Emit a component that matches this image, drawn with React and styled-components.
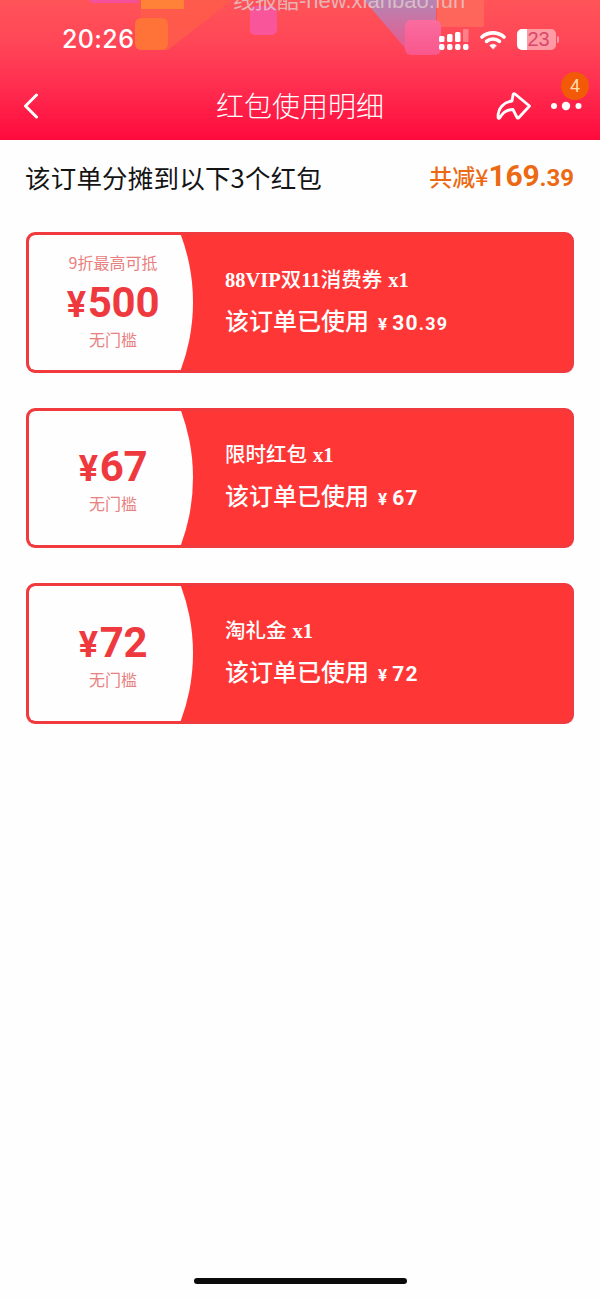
import { createGlobalStyle, styled } from "styled-components";

const CJK = `"Noto Sans CJK SC", "Noto Sans", sans-serif`;
const NUM = `Roboto, "Liberation Sans", sans-serif`;

const GlobalStyle = createGlobalStyle`
  html, body {
    margin: 0;
    padding: 0;
    background: #fff;
  }
  body {
    font-family: ${CJK};
  }
`;

const Page = styled.div`
  width: 600px;
  height: 1298px;
  display: flex;
  flex-direction: column;
  overflow: hidden;
  background: #fefefe;
`;

const Header = styled.header`
  position: relative;
  height: 140px;
  flex: none;
  overflow: hidden;
  color: #fff;
  background: linear-gradient(180deg, #ff5458 0%, #ff4657 30%, #ff2f50 60%, #ff0a3c 100%);
`;

const Decor = styled.svg`
  position: absolute;
  inset: 0;
  filter: blur(0.7px);
`;

const Watermark = styled.div`
  position: absolute;
  top: -12px;
  left: 233px;
  font-family: "Liberation Sans", ${CJK};
  font-size: 22px;
  line-height: 26px;
  white-space: nowrap;
  color: rgba(225, 205, 205, 0.8);
`;

const StatusBar = styled.div`
  position: relative;
  height: 78px;
  box-sizing: border-box;
  padding: 24px 44px 0 62px;
  display: flex;
  align-items: flex-start;
  justify-content: space-between;
`;

const Clock = styled.div`
  font-family: "Inter", ${NUM};
  font-size: 25px;
  font-weight: 500;
  line-height: 30px;
  letter-spacing: 0.4px;
`;

const StatusIcons = styled.div`
  display: flex;
  align-items: center;
  gap: 11px;
  margin-top: 5px;
`;

const Battery = styled.div`
  position: relative;
  width: 39px;
  height: 21px;
  border-radius: 5px;
  background: linear-gradient(90deg, #fff 0 10px, rgba(255, 255, 255, 0.45) 10px);
  display: flex;
  align-items: center;
  justify-content: center;
  padding-left: 4px;
  box-sizing: border-box;
  font-family: "Liberation Sans", sans-serif;
  font-size: 20px;
  color: #d9476c;
  &::after {
    content: "";
    position: absolute;
    right: -3px;
    top: 7px;
    width: 2px;
    height: 7px;
    border-radius: 0 2px 2px 0;
    background: rgba(255, 255, 255, 0.45);
  }
`;

const NavBar = styled.nav`
  position: relative;
  height: 56px;
  box-sizing: border-box;
  padding: 0 17px 0 23px;
  display: flex;
  align-items: center;
  justify-content: space-between;
`;

const NavTitle = styled.h1`
  position: absolute;
  top: 7px;
  left: 0;
  right: 0;
  margin: 0;
  text-align: center;
  font-size: 28px;
  font-weight: 300;
  line-height: 40px;
  color: #fff;
`;

const NavActions = styled.div`
  display: flex;
  align-items: center;
  gap: 19px;
`;

const MoreButton = styled.div`
  position: relative;
  display: flex;
  align-items: center;
`;

const Badge = styled.span`
  position: absolute;
  top: -29px;
  right: -6px;
  width: 28px;
  height: 28px;
  border-radius: 50%;
  background: #f25a08;
  color: #ffdca8;
  font-family: ${NUM};
  font-size: 18px;
  line-height: 28px;
  text-align: center;
`;

const Summary = styled.div`
  display: flex;
  align-items: center;
  justify-content: space-between;
  padding: 16px 26px 0;
  height: 42px;
`;

const SummaryText = styled.div`
  font-size: 25.5px;
  line-height: 42px;
  color: #141414;
  letter-spacing: 0.2px;
  margin-left: -1px;
`;

const Total = styled.div`
  display: flex;
  align-items: baseline;
  color: #ec6a14;
  font-size: 23px;
  font-weight: 500;
  line-height: 42px;
`;

const Num = styled.span`
  font-family: ${NUM};
  font-size: ${props => props.size}px;
  font-weight: 700;
  letter-spacing: ${props => props.spacing || 0}px;
`;

const Coupons = styled.div`
  display: flex;
  flex-direction: column;
  gap: 35px;
  padding: 34px 26px 0;
`;

const Card = styled.div`
  height: 140.5px;
  box-sizing: border-box;
  border: 3px solid #f03a3e;
  border-radius: 9px;
  background: #ff3636;
  display: flex;
  overflow: hidden;
`;

const Face = styled.div`
  width: 164px;
  flex: none;
  box-sizing: border-box;
  padding: 0 0 4px 4px;
  background: #fefefe;
  border-radius: 6px 0 0 6px;
  clip-path: circle(193px at -29px 50%);
  display: flex;
  flex-direction: column;
  align-items: center;
  justify-content: center;
`;

const FaceNote = styled.div`
  font-size: 16px;
  line-height: 22px;
  color: #e98080;
`;

const FaceAmount = styled.div`
  display: flex;
  align-items: baseline;
  gap: 3px;
  margin-top: 7px;
  color: #ee3a3e;
  font-family: ${NUM};
  font-weight: 700;
  font-size: 42px;
  line-height: 46px;
  letter-spacing: -0.3px;
`;

const Yen = styled.span`
  font-size: 36px;
  margin-right: -1px;
`;

const Body = styled.div`
  flex: 1;
  padding: 0 0 1px 32px;
  color: #fff;
  display: flex;
  flex-direction: column;
  justify-content: center;
  gap: 7px;
`;

const CouponName = styled.div`
  font-size: 20.5px;
  font-weight: 500;
  line-height: 31px;
  white-space: nowrap;
`;

const Latin = styled.span`
  font-family: "Liberation Serif", serif;
  font-weight: 700;
  margin-left: ${props => props.gap || 0}px;
`;

const Used = styled.div`
  display: flex;
  align-items: baseline;
  font-size: 24px;
  font-weight: 500;
  line-height: 34px;
  white-space: nowrap;
`;

const UsedAmount = styled.span`
  margin-left: 9px;
  font-family: ${NUM};
  font-size: 21px;
  font-weight: 700;
  letter-spacing: 1.2px;
`;

const UsedYen = styled.span`
  font-size: 17px;
  margin-right: 4px;
`;

const UsedCents = styled.span`
  font-size: 18px;
`;

const HomeBar = styled.div`
  width: 213px;
  height: 6px;
  flex: none;
  margin: auto auto 14px;
  border-radius: 3px;
  background: #0a0a0a;
`;

const coupons = [
  {
    note: "9折最高可抵",
    face: "500",
    name: <><Latin>88VIP</Latin>双<Latin>11</Latin>消费券</>,
    used: "30",
    cents: ".39",
  },
  { face: "67", name: "限时红包", used: "67" },
  { face: "72", name: "淘礼金", used: "72" },
];

function HeaderDecor() {
  return (
    <Decor width="600" height="140" viewBox="0 0 600 140">
      <defs>
        <linearGradient id="violet" x1="0" y1="0" x2="0" y2="1">
          <stop offset="0" stopColor="#b088b8" stopOpacity="0.95" />
          <stop offset="1" stopColor="#e0609a" stopOpacity="0.85" />
        </linearGradient>
        <linearGradient id="tile" x1="0" y1="0" x2="0" y2="1">
          <stop offset="0" stopColor="#fa6c9f" />
          <stop offset="1" stopColor="#f9578c" />
        </linearGradient>
      </defs>
      <rect x="90" y="-8" width="48" height="11" fill="#f5509a" />
      <polygon points="141,0 232,0 168,50 141,50" fill="#ff5e48" opacity="0.75" />
      <rect x="141" y="-8" width="43" height="17" fill="#ff8238" />
      <rect x="135" y="18" width="33" height="32" rx="6" fill="#ff7238" />
      <rect x="250" y="6" width="27" height="29" rx="5" fill="#f9559a" />
      <polygon points="364,0 436,0 436,25 405,48" fill="url(#violet)" />
      <rect x="437" y="-6" width="47" height="33" rx="2" fill="#ff6a5c" opacity="0.85" />
      <rect x="405" y="20" width="36" height="35" rx="6" fill="url(#tile)" />
    </Decor>
  );
}

function SignalIcon() {
  return (
    <svg width="30" height="21" viewBox="0 0 30 21" fill="#fff">
      <rect x="0" y="7" width="5.5" height="6" rx="1.5" />
      <rect x="8" y="5" width="5.5" height="8" rx="1.5" />
      <rect x="16" y="3" width="5.5" height="10" rx="1.5" />
      <rect x="24" y="0" width="5.5" height="13" rx="1" opacity="0.3" />
      <rect x="0" y="15" width="5.5" height="6" rx="2" />
      <rect x="8" y="15" width="5.5" height="6" rx="2" />
      <rect x="16" y="15" width="5.5" height="6" rx="2" />
      <rect x="24" y="15" width="5.5" height="6" rx="2" />
    </svg>
  );
}

function WifiIcon() {
  return (
    <svg width="26" height="20" viewBox="0 0 26 20" fill="none" stroke="#fff" strokeWidth="3.6" strokeLinecap="round">
      <path d="M2 7 C8 1.5 18 1.5 24 7" />
      <path d="M6.5 11.4 C10 8.2 16 8.2 19.5 11.4" />
      <path d="M13 19 L9.8 15.4 C11.5 13.9 14.5 13.9 16.2 15.4 Z" fill="#fff" strokeWidth="0.6" strokeLinejoin="round" />
    </svg>
  );
}

function BackIcon() {
  return (
    <svg width="16" height="26" viewBox="0 0 16 26" fill="none" stroke="#fff" strokeWidth="3" strokeLinecap="round" strokeLinejoin="round">
      <path d="M13.5 2 L2.5 13 L13.5 24" />
    </svg>
  );
}

function ShareIcon() {
  return (
    <svg width="36" height="28" viewBox="0 0 36 28" fill="none" stroke="#fff" strokeWidth="2.8" strokeLinejoin="round" strokeLinecap="round">
      <path d="M19 2 L33.5 14 L22.5 26 Q21.5 26.6 21 25.5 L17 17.5 C11 17.5 6.5 21 4 25.5 C3 27 2 26.5 2 25 C2 16 8 10 16 9 L17 3 C17.3 1.6 18 1.4 19 2 Z" />
    </svg>
  );
}

function MoreIcon() {
  return (
    <svg width="32" height="10" viewBox="0 0 32 10" fill="#fff">
      <circle cx="3" cy="5" r="3" />
      <circle cx="15" cy="5" r="4.2" />
      <circle cx="27.5" cy="5" r="3" />
    </svg>
  );
}

export default function App() {
  return (
    <Page>
      <GlobalStyle />
      <Header>
        <HeaderDecor />
        <Watermark>线报酷-new.xianbao.fun</Watermark>
        <StatusBar>
          <Clock>20:26</Clock>
          <StatusIcons>
            <SignalIcon />
            <WifiIcon />
            <Battery>23</Battery>
          </StatusIcons>
        </StatusBar>
        <NavBar>
          <BackIcon />
          <NavTitle>红包使用明细</NavTitle>
          <NavActions>
            <ShareIcon />
            <MoreButton>
              <MoreIcon />
              <Badge>4</Badge>
            </MoreButton>
          </NavActions>
        </NavBar>
      </Header>

      <Summary>
        <SummaryText>该订单分摊到以下3个红包</SummaryText>
        <Total>
          共减¥<Num size={30} spacing={-0.2}>169</Num><Num size={24}>.39</Num>
        </Total>
      </Summary>

      <Coupons>
        {coupons.map(coupon => (
          <Card key={coupon.face}>
            <Face>
              {coupon.note && <FaceNote>{coupon.note}</FaceNote>}
              <FaceAmount>
                <Yen>¥</Yen>{coupon.face}
              </FaceAmount>
              <FaceNote>无门槛</FaceNote>
            </Face>
            <Body>
              <CouponName>{coupon.name}<Latin gap={6}>x1</Latin></CouponName>
              <Used>
                该订单已使用
                <UsedAmount>
                  <UsedYen>¥</UsedYen>{coupon.used}
                  {coupon.cents && <UsedCents>{coupon.cents}</UsedCents>}
                </UsedAmount>
              </Used>
            </Body>
          </Card>
        ))}
      </Coupons>

      <HomeBar />
    </Page>
  );
}
